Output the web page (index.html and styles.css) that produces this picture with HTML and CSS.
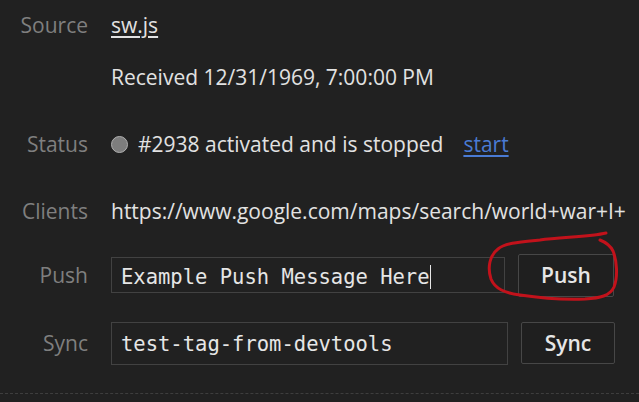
FILE: index.html
```html
<!DOCTYPE html>
<html>
<head>
<meta charset="utf-8">
<link rel="stylesheet" href="styles.css">
</head>
<body>
<div class="panel">
  <div class="row r-source">
    <div class="label">Source</div>
    <div class="value"><a class="file">sw.js</a></div>
  </div>
  <div class="row r-received">
    <div class="label"></div>
    <div class="value">Received 12/31/1969, 7:00:00 PM</div>
  </div>
  <div class="row r-status">
    <div class="label">Status</div>
    <div class="value status"><span class="dot"></span><span>#2938 activated and is stopped</span><a class="link">start</a></div>
  </div>
  <div class="row r-clients">
    <div class="label">Clients</div>
    <div class="value nowrap">https://www.google.com/maps/search/world+war+I+</div>
  </div>
  <div class="row r-push">
    <div class="label">Push</div>
    <div class="value form">
      <div class="input push-input">Example Push Message Here<span class="caret"></span></div>
      <div class="btn push-btn">Push</div>
      <svg class="scribble" width="140" height="80" viewBox="480 228 140 80">
        <path d="M606 234 C590 238 560 238 540 241 C520 243 505 244 498 250 C490 256 487 268 491 280 C495 290 505 294 520 296 C540 299 560 301 585 300 C600 299 610 297 614 288 C618 278 617 262 613 252 C610 246 605 243 600 241" fill="none" stroke="#c2121b" stroke-width="3" stroke-linecap="round"/>
      </svg>
    </div>
  </div>
  <div class="row r-sync">
    <div class="label">Sync</div>
    <div class="value form">
      <div class="input sync-input">test-tag-from-devtools</div>
      <div class="btn sync-btn">Sync</div>
    </div>
  </div>
</div>
</body>
</html>
```

FILE: styles.css
```css
html, body {
  margin: 0;
  padding: 0;
  background: #212121;
  width: 639px;
  height: 402px;
  overflow: hidden;
}
.panel {
  font-family: "Open Sans", "Noto Sans", sans-serif;
  font-size: 21px;
  color: #e2e2e2;
  height: 393px;
  border-bottom: 1px dashed #3e3e3e;
}
.row {
  display: flex;
  align-items: center;
  gap: 23px;
}
.label {
  width: 88px;
  flex: none;
  text-align: right;
  color: #7f7f7f;
}
.value {
  white-space: nowrap;
}
.r-source { height: 50px; }
.r-received { height: 54px; }
.r-status { height: 80px; }
.r-clients { height: 54px; }
.r-push { height: 74px; }
.r-sync { height: 62px; }
.file {
  color: #e2e2e2;
  text-decoration: underline;
  text-underline-offset: 3px;
}
.status {
  display: flex;
  align-items: center;
}
.dot {
  width: 15px;
  height: 15px;
  border-radius: 50%;
  background: #7d7d7d;
  border: 1px solid #b0b0b0;
  margin-right: 10px;
}
.link {
  color: #4a7bd4;
  text-decoration: underline;
  text-underline-offset: 3px;
  margin-left: 20px;
}
.form {
  position: relative;
  display: flex;
  align-items: center;
}
.input {
  box-sizing: border-box;
  border: 1px solid #424242;
  font-family: "DejaVu Sans Mono", monospace;
  font-size: 20.5px;
  color: #e6e6e6;
  padding-left: 9px;
  padding-top: 3px;
  display: flex;
  align-items: center;
}
.push-input { width: 394px; height: 36px; }
.sync-input { width: 397px; height: 43px; padding-top: 1px; }
.caret {
  display: inline-block;
  width: 1px;
  height: 24px;
  background: #e6e6e6;
}
.btn {
  box-sizing: border-box;
  border: 1px solid #474747;
  border-radius: 2px;
  background: #1f1f1f;
  color: #e6e6e6;
  font-weight: 600;
  display: flex;
  align-items: center;
  justify-content: center;
}
.push-btn { width: 96px; height: 43px; margin-left: 13px; }
.sync-btn { width: 94px; height: 42px; margin-left: 13px; }
.scribble {
  position: absolute;
  left: 369px;
  top: -27px;
  pointer-events: none;
}
```
